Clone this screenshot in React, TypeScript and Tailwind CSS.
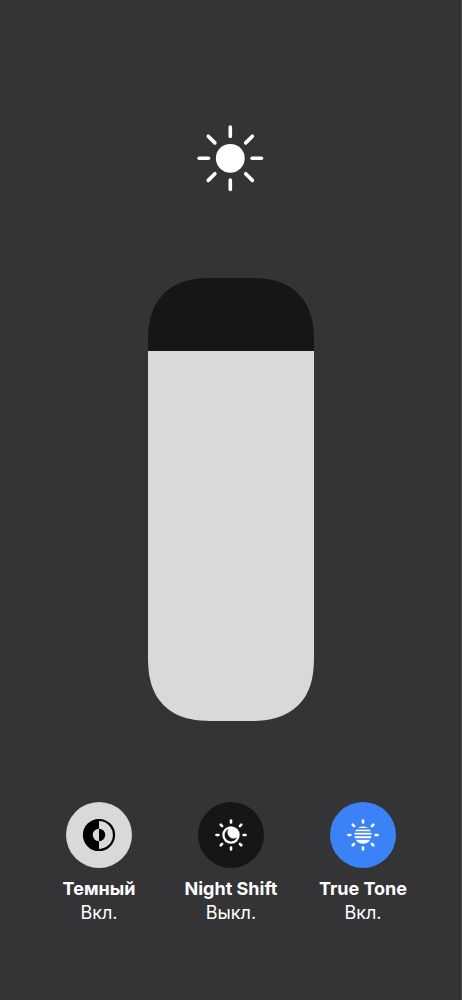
import { useState, type ReactNode } from 'react';

const rayAngles = [0, 45, 90, 135, 180, 225, 270, 315];

const Rays = ({ center, from, to, width }: { center: number, from: number, to: number, width: number }) => (
    <g stroke="currentColor" strokeWidth={width} strokeLinecap="round">
        {rayAngles.map((angle) => (
            <line
                key={angle}
                x1={center}
                y1={center - from}
                x2={center}
                y2={center - to}
                transform={`rotate(${angle} ${center} ${center})`}
            />
        ))}
    </g>
);

const SunIcon = () => (
    <svg viewBox="0 0 67 67" className="size-[67px] text-white" aria-hidden="true">
        <circle cx="33.3" cy="33.3" r="14.4" fill="currentColor" />
        <Rays center={33.3} from={21.8} to={31.2} width={3.6} />
    </svg>
);

const DarkModeIcon = () => (
    <svg viewBox="0 0 34 34" className="size-[34px] text-black" aria-hidden="true">
        <circle cx="17" cy="17" r="15" fill="none" stroke="currentColor" strokeWidth="2.2" />
        <path d="M17 1.5a15.5 15.5 0 0 0 0 31v-9.3a6.2 6.2 0 0 1 0-12.4z" fill="currentColor" />
        <path d="M17 10.8a6.2 6.2 0 0 1 0 12.4z" fill="currentColor" />
    </svg>
);

const NightShiftIcon = () => (
    <svg viewBox="0 0 34 34" className="size-[34px] text-white" aria-hidden="true">
        <circle cx="17" cy="17" r="8.7" fill="currentColor" />
        <path d="M14.5 11.1a6.4 6.4 0 1 0 8.4 8.4a6.1 6.1 0 0 1-8.4-8.4z" fill="#161618" />
        <Rays center={17} from={12.6} to={14.5} width={2.6} />
    </svg>
);

const TrueToneIcon = () => (
    <svg viewBox="0 0 34 34" className="size-[34px] text-white" aria-hidden="true">
        <clipPath id="true-tone-disc">
            <circle cx="17" cy="17" r="8.7" />
        </clipPath>
        <g clipPath="url(#true-tone-disc)" fill="currentColor">
            <rect x="8" y="8.2" width="18" height="1.8" />
            <rect x="8" y="11.6" width="18" height="1.6" />
            <rect x="8" y="14.8" width="18" height="1.8" />
            <rect x="8" y="18.2" width="18" height="2" />
            <rect x="8" y="21.8" width="18" height="5" />
        </g>
        <Rays center={17} from={12.6} to={14.5} width={2.6} />
    </svg>
);

const ModeButton = ({ title, on, activeClass, onToggle, children }: {
    title: string,
    on: boolean,
    activeClass: string,
    onToggle: () => void,
    children: ReactNode
}) => (
    <button
        type="button"
        aria-pressed={on}
        onClick={onToggle}
        className="flex flex-col items-center text-center text-[18px] leading-6 text-white"
    >
        <span className={`mb-[9px] flex size-[66px] items-center justify-center rounded-full ${on ? activeClass : 'bg-[#161618]'}`}>
            {children}
        </span>
        <span className="font-bold whitespace-nowrap">{title}</span>
        <span>{on ? 'Вкл.' : 'Выкл.'}</span>
    </button>
);

export default function App() {
    const [brightness, setBrightness] = useState(83.5);
    const [dark, setDark] = useState(true);
    const [nightShift, setNightShift] = useState(false);
    const [trueTone, setTrueTone] = useState(true);

    return (
        <main className="flex min-h-screen flex-col items-center border-r border-[#4b4b4d] bg-[#343436] pt-[125px] pb-[72px] font-['Inter','Liberation_Sans',sans-serif]">
            <SunIcon />

            <div className="relative mt-[86px] flex h-[443px] w-[166px] flex-col justify-end overflow-hidden rounded-[64px] bg-[#161618] [corner-shape:superellipse(1.3)]">
                <div className="bg-[#d9d9db]" style={{ height: `${brightness}%` }} />
                <input
                    type="range"
                    aria-label="Яркость"
                    min={0}
                    max={100}
                    step={0.5}
                    value={brightness}
                    onChange={(e) => setBrightness(Number(e.target.value))}
                    className="absolute inset-0 size-full cursor-pointer opacity-0 [direction:rtl] [writing-mode:vertical-lr]"
                />
            </div>

            <div className="mt-[81px] grid w-full grid-cols-3 pr-8 pl-[33px]">
                <ModeButton title="Темный" on={dark} activeClass="bg-[#d9d9db]" onToggle={() => setDark(!dark)}>
                    <DarkModeIcon />
                </ModeButton>
                <ModeButton title="Night Shift" on={nightShift} activeClass="bg-[#f59e0b]" onToggle={() => setNightShift(!nightShift)}>
                    <NightShiftIcon />
                </ModeButton>
                <ModeButton title="True Tone" on={trueTone} activeClass="bg-[#3b82f7]" onToggle={() => setTrueTone(!trueTone)}>
                    <TrueToneIcon />
                </ModeButton>
            </div>
        </main>
    );
}
